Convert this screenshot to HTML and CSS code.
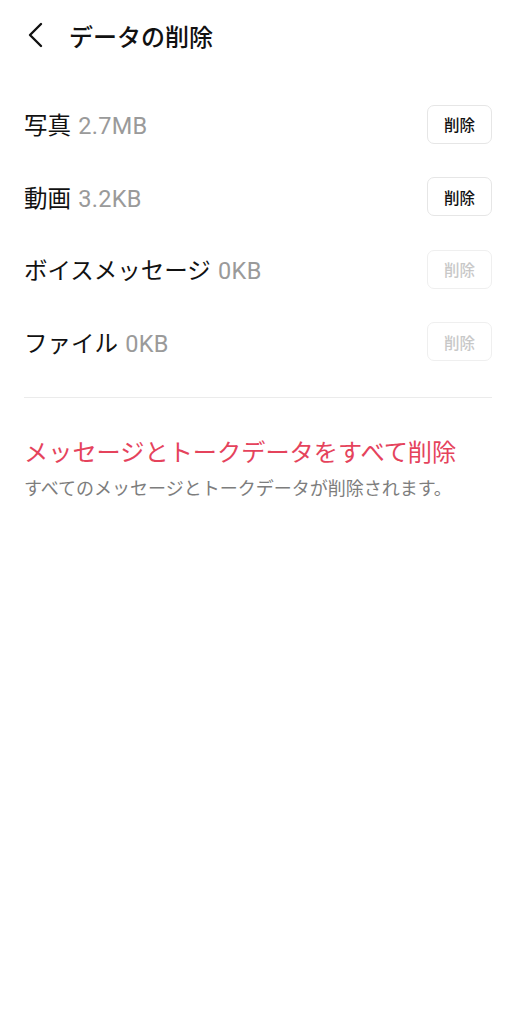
FILE: index.html
```html
<!DOCTYPE html>
<html lang="ja">
<head>
  <meta charset="UTF-8">
  <title>データの削除</title>
  <meta name="viewport" content="width=device-width, initial-scale=1.0">
  <link rel="stylesheet" href="styles.css">
</head>
<body>

  <header class="header">
    <svg class="back" width="20" height="26" viewBox="0 0 20 26">
      <path d="M15 2 L4 13 L15 24" fill="none" stroke="#111" stroke-width="2.4" stroke-linecap="round" stroke-linejoin="round"/>
    </svg>
    <h1>データの削除</h1>
  </header>

  <div class="list">
    <div class="row">
      <span class="name">写真 <span class="size">2.7MB</span></span>
      <button class="del">削除</button>
    </div>
    <div class="row">
      <span class="name">動画 <span class="size">3.2KB</span></span>
      <button class="del">削除</button>
    </div>
    <div class="row">
      <span class="name">ボイスメッセージ <span class="size">0KB</span></span>
      <button class="del" disabled>削除</button>
    </div>
    <div class="row">
      <span class="name">ファイル <span class="size">0KB</span></span>
      <button class="del" disabled>削除</button>
    </div>
  </div>

  <hr class="divider">

  <div class="all">
    <div class="all-title">メッセージとトークデータをすべて削除</div>
    <div class="all-note">すべてのメッセージとトークデータが削除されます。</div>
  </div>

</body>
</html>
```

FILE: styles.css
```css
html, body {
  margin: 0;
  padding: 0;
  background: #fff;
  font-family: "Noto Sans CJK JP", "Noto Sans", sans-serif;
  color: #111;
}

body {
  padding: 0 24px;
}

.header {
  display: flex;
  align-items: center;
  height: 70px;
}

.back {
  margin-left: 2px;
  margin-right: 23px;
}

h1 {
  margin: 0;
  font-size: 24px;
  font-weight: 500;
}

.list {
  padding-top: 18px;
}

.row {
  display: flex;
  align-items: center;
  justify-content: space-between;
  height: 72.5px;
}

.name {
  font-size: 23.5px;
  word-spacing: 2px;
}

.size {
  font-family: Roboto, "Noto Sans", sans-serif;
  font-size: 23.5px;
  color: #9a9a9a;
  letter-spacing: 0.3px;
}

.del {
  width: 65px;
  height: 39px;
  background: #fff;
  border: 1px solid #e6e6e6;
  border-radius: 7px;
  font-family: "Noto Sans CJK JP", sans-serif;
  font-size: 15.5px;
  font-weight: 500;
  color: #111;
  padding: 0;
}

.del:disabled {
  color: #c8c8c8;
  border-color: #efefef;
}

.divider {
  margin: 19px 0 0;
  border: 0;
  border-top: 1px solid #ebebeb;
}

.all {
  padding-top: 35px;
}

.all-title {
  font-size: 24.2px;
  color: #e5435c;
  line-height: 36px;
}

.all-note {
  font-size: 18px;
  color: #7d7d7d;
  margin-top: 5px;
}
```
